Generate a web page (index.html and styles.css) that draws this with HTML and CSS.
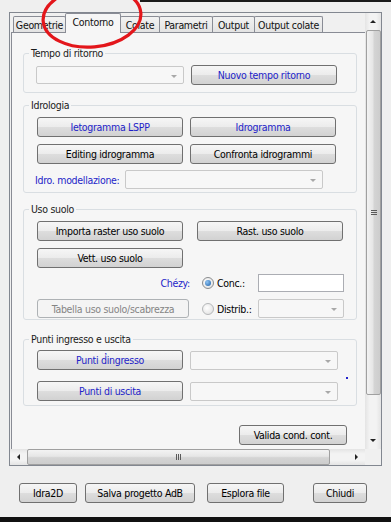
FILE: index.html
```html
<!DOCTYPE html>
<html>
<head>
<meta charset="utf-8">
<link rel="stylesheet" href="styles.css">
</head>
<body>
<div class="topline"></div>
<div class="frame">
  <div class="viewport">
    <div class="tabctl">
      <div class="tabs">
        <div class="tab t-geo">Geometrie</div>
        <div class="tab sel t-con">Contorno</div>
        <div class="tab t-col">Colate</div>
        <div class="tab t-par">Parametri</div>
        <div class="tab t-out">Output</div>
        <div class="tab t-oc">Output colate</div>
      </div>
      <div class="panel">
        <div class="group g-tempo">
          <div class="glabel">Tempo di ritorno</div>
          <div class="row r-tempo">
            <div class="combo dis w-tcombo"><span class="arrow"></span></div>
            <div class="btn blue w-btn">Nuovo tempo ritorno</div>
          </div>
        </div>

        <div class="group g-idro">
          <div class="glabel">Idrologia</div>
          <div class="row r-first">
            <div class="btn blue w-btn">Ietogramma LSPP</div>
            <div class="btn blue w-btn">Idrogramma</div>
          </div>
          <div class="row r-second">
            <div class="btn w-btn">Editing idrogramma</div>
            <div class="btn w-btn">Confronta idrogrammi</div>
          </div>
          <div class="row r-idromod">
            <span class="bluelabel idrolabel">Idro. modellazione:</span>
            <div class="combo dis w-icombo"><span class="arrow"></span></div>
          </div>
        </div>

        <div class="group g-uso">
          <div class="glabel">Uso suolo</div>
          <div class="row r-first">
            <div class="btn w-btn">Importa raster uso suolo</div>
            <div class="btn w-btn m-rast">Rast. uso suolo</div>
          </div>
          <div class="row r-second">
            <div class="btn w-btn">Vett. uso suolo</div>
          </div>
          <div class="row r-chezy">
            <span class="bluelabel chezy">Chézy:</span>
            <span class="radio checked"></span>
            <span class="rlabel">Conc.:</span>
            <div class="textbox"></div>
          </div>
          <div class="row r-tab">
            <div class="btn disabled w-tab">Tabella uso suolo/scabrezza</div>
            <span class="radio"></span>
            <span class="rlabel">Distrib.:</span>
            <div class="combo dis w-dcombo"><span class="arrow"></span></div>
          </div>
        </div>

        <div class="group g-punti">
          <div class="glabel">Punti ingresso e uscita</div>
          <div class="row r-p1">
            <div class="btn blue w-btn">Punti d̓ingresso</div>
            <div class="combo dis w-pcombo"><span class="arrow"></span></div>
          </div>
          <div class="row r-p2">
            <div class="btn blue w-btn">Punti di uscita</div>
            <div class="combo dis w-pcombo"><span class="arrow"></span></div>
            <span class="dot"></span>
          </div>
        </div>

        <div class="valrow">
          <div class="btn w-val">Valida cond. cont.</div>
        </div>
      </div>
    </div>
  </div>
  <div class="vscroll">
    <div class="sbtn"><span class="tri up"></span></div>
    <div class="vthumb"><span class="grip-h"></span><span class="grip-h"></span><span class="grip-h"></span></div>
    <div class="vtrack"></div>
    <div class="sbtn"><span class="tri down"></span></div>
  </div>
  <div class="hscroll">
    <div class="hbtn"><span class="tri left"></span></div>
    <div class="hthumb"><span class="grip-v"></span><span class="grip-v"></span><span class="grip-v"></span></div>
    <div class="htrack"></div>
    <div class="hbtn"><span class="tri right"></span></div>
  </div>
  <div class="corner"></div>
</div>
<div class="bottombar">
  <div class="btn b-idra">Idra2D</div>
  <div class="btn b-salva">Salva progetto AdB</div>
  <div class="btn b-esplora">Esplora file</div>
  <div class="btn b-chiudi">Chiudi</div>
</div>
<div class="bottomblack"></div>
<svg class="ring" width="130" height="80" viewBox="0 0 130 80">
  <ellipse cx="62" cy="32" rx="49" ry="30" fill="none" stroke="#e3161b" stroke-width="3.2" transform="rotate(-5 62 32)"/>
</svg>
</body>
</html>
```

FILE: styles.css
```css
html, body {
  margin: 0;
  padding: 0;
}
body {
  width: 391px;
  height: 522px;
  overflow: hidden;
  background: #efefef;
  font-family: "DejaVu Sans Condensed", "DejaVu Sans", sans-serif;
  font-size: 10.5px;
  letter-spacing: -0.3px;
  color: #000;
  position: relative;
}
.topline {
  height: 2px;
  margin-left: 140px;
  background: #1a1a1a;
}
.frame {
  margin: 10px 0 0 9px;
  width: 373px;
  height: 454px;
  box-sizing: border-box;
  border: 1px solid #828790;
  display: grid;
  grid-template-columns: 355px 16px;
  grid-template-rows: 436px 16px;
  background: #f0f0f0;
}
.viewport {
  overflow: hidden;
  position: relative;
}
.tabctl {
  margin-left: 1px;
  width: 380px;
}
.tabs {
  display: flex;
  align-items: flex-end;
  height: 19px;
  padding-left: 2px;
}
.tab {
  height: 16px;
  box-sizing: border-box;
  border: 1px solid #898c95;
  border-bottom: none;
  border-radius: 2px 2px 0 0;
  background: linear-gradient(#f2f2f2, #e3e3e3);
  display: flex;
  align-items: center;
  justify-content: center;
  margin-right: -1px;
  color: #111;
  white-space: nowrap;
}
.tab.sel {
  height: 20px;
  margin-bottom: -1px;
  background: #f6f6f6;
  position: relative;
  z-index: 1;
  padding-bottom: 3px;
}
.t-geo { width: 53px; }
.t-con { width: 56px; }
.t-col { width: 40px; }
.t-par { width: 54px; }
.t-out { width: 43px; }
.t-oc { width: 69px; }

.panel {
  border: 1px solid #898c95;
  background: #f6f6f6;
  height: 430px;
  display: flex;
  flex-direction: column;
}
.group {
  margin-left: 11px;
  width: 334px;
  box-sizing: border-box;
  border: 1px solid #d9dee2;
  border-radius: 3px;
  padding-left: 13px;
  display: flex;
  flex-direction: column;
}
.glabel {
  margin: -7px 0 0 -8px;
  line-height: 13px;
  height: 13px;
  padding: 0 2px;
  background: #f6f6f6;
  align-self: flex-start;
  color: #1b1b1b;
}
.g-tempo { margin-top: 20px; padding-bottom: 7px; }
.g-idro { margin-top: 12px; padding-bottom: 3px; }
.g-uso { margin-top: 16px; padding-bottom: 1px; }
.g-punti { margin-top: 19px; padding-bottom: 4px; }

.row {
  display: flex;
  align-items: center;
  gap: 7px;
}
.r-tempo { margin-top: 5px; margin-left: -1px; }
.r-first { margin-top: 5px; }
.r-second { margin-top: 7px; }
.r-idromod { margin-top: 6px; margin-left: -2px; gap: 0; }
.idrolabel { width: 90px; }
.r-chezy { margin-top: 6px; gap: 0; }
.r-tab { margin-top: 7px; gap: 0; }
.r-p1 { margin-top: 4px; }
.r-p2 { margin-top: 11px; }

.btn {
  height: 20px;
  box-sizing: border-box;
  border: 1px solid #707070;
  border-radius: 3px;
  background: linear-gradient(#f6f6f6 0%, #ececec 48%, #dddddd 52%, #d2d2d2 100%);
  display: flex;
  align-items: center;
  justify-content: center;
  white-space: nowrap;
  color: #000;
}
.btn.blue { color: #1e1ec8; }
.btn.disabled {
  border-color: #aeb2b5;
  background: #f4f4f4;
  color: #858585;
}
.w-btn { width: 146px; }
.m-rast { margin-left: 7px; }
.w-tab { width: 152px; height: 19px; }
.w-val { width: 108px; }

.combo {
  height: 19px;
  box-sizing: border-box;
  border: 1px solid #c9c9c9;
  border-radius: 2px;
  background: #f7f7f7;
  position: relative;
}
.combo .arrow {
  position: absolute;
  right: 6px;
  top: 8px;
  width: 0;
  height: 0;
  border-left: 3px solid transparent;
  border-right: 3px solid transparent;
  border-top: 3px solid #a8a8a8;
}
.w-tcombo { width: 148px; height: 18px; }
.w-icombo { width: 198px; }
.w-dcombo { width: 86px; }
.w-pcombo { width: 148px; }

.bluelabel { color: #1e1ec8; white-space: nowrap; }
.chezy {
  width: 153px;
  text-align: right;
}
.radio {
  width: 12px;
  height: 12px;
  box-sizing: border-box;
  border: 1px solid #8a8c8e;
  border-radius: 50%;
  background: radial-gradient(circle at 40% 40%, #ffffff, #dcdcdc);
  margin-left: 12px;
  display: flex;
  align-items: center;
  justify-content: center;
}
.r-tab .radio { margin-left: 13px; border-color: #b5b7b9; }
.radio.checked::after {
  content: "";
  width: 6px;
  height: 6px;
  border-radius: 50%;
  background: radial-gradient(circle at 35% 35%, #8fc3f2, #1b5fa8);
}
.rlabel {
  margin-left: 3px;
  width: 41px;
  white-space: nowrap;
}
.textbox {
  width: 86px;
  height: 18px;
  box-sizing: border-box;
  border: 1px solid #abadb3;
  background: #fff;
}
.dot {
  width: 2px;
  height: 2px;
  background: #2222cc;
  align-self: flex-start;
  margin: -4px 0 0 1px;
}

.valrow {
  margin-top: 19px;
  padding-left: 227px;
  display: flex;
}

/* scrollbars */
.vscroll {
  grid-column: 2;
  grid-row: 1;
  display: flex;
  flex-direction: column;
  background: linear-gradient(to right, #e4e4e4, #f3f3f3 30%, #f3f3f3 70%, #e4e4e4);
}
.sbtn {
  height: 17px;
  display: flex;
  align-items: center;
  justify-content: center;
}
.vthumb {
  height: 365px;
  margin: 0 0 0 1px;
  box-sizing: border-box;
  border: 1px solid #a0a0a0;
  border-radius: 2px;
  background: linear-gradient(to right, #f3f3f3, #e6e6e6 45%, #d4d4d4 55%, #cdcdcd);
  display: flex;
  flex-direction: column;
  align-items: center;
  justify-content: center;
  gap: 1px;
}
.grip-h {
  width: 6px;
  height: 1px;
  background: #5a5a5a;
}
.vtrack { flex: 1; }
.hscroll {
  grid-column: 1;
  grid-row: 2;
  display: flex;
  background: linear-gradient(#e4e4e4, #f3f3f3 30%, #f3f3f3 70%, #e4e4e4);
}
.hbtn {
  width: 17px;
  display: flex;
  align-items: center;
  justify-content: center;
}
.hthumb {
  width: 303px;
  box-sizing: border-box;
  border: 1px solid #a0a0a0;
  border-radius: 2px;
  background: linear-gradient(#f3f3f3, #e6e6e6 45%, #d4d4d4 55%, #cdcdcd);
  display: flex;
  align-items: center;
  justify-content: center;
  gap: 1px;
}
.grip-v {
  width: 1px;
  height: 6px;
  background: #5a5a5a;
}
.htrack { flex: 1; }
.corner {
  grid-column: 2;
  grid-row: 2;
  background: #f0f0f0;
}
.tri {
  width: 0;
  height: 0;
}
.tri.up {
  border-left: 3px solid transparent;
  border-right: 3px solid transparent;
  border-bottom: 3px solid #222;
}
.tri.down {
  border-left: 3px solid transparent;
  border-right: 3px solid transparent;
  border-top: 3px solid #222;
}
.tri.left {
  border-top: 3px solid transparent;
  border-bottom: 3px solid transparent;
  border-right: 3px solid #222;
}
.tri.right {
  border-top: 3px solid transparent;
  border-bottom: 3px solid transparent;
  border-left: 3px solid #222;
}

.bottombar {
  margin-top: 17px;
  height: 20px;
  display: flex;
  padding-left: 19px;
}
.b-idra { width: 58px; }
.b-salva { width: 110px; margin-left: 8px; }
.b-esplora { width: 77px; margin-left: 12px; }
.b-chiudi { width: 54px; margin-left: 29px; }
.bottomblack {
  position: absolute;
  left: 0;
  right: 0;
  bottom: 0;
  height: 5px;
  background: #111;
}
.ring {
  position: absolute;
  left: 30px;
  top: -15px;
  z-index: 5;
}
```
